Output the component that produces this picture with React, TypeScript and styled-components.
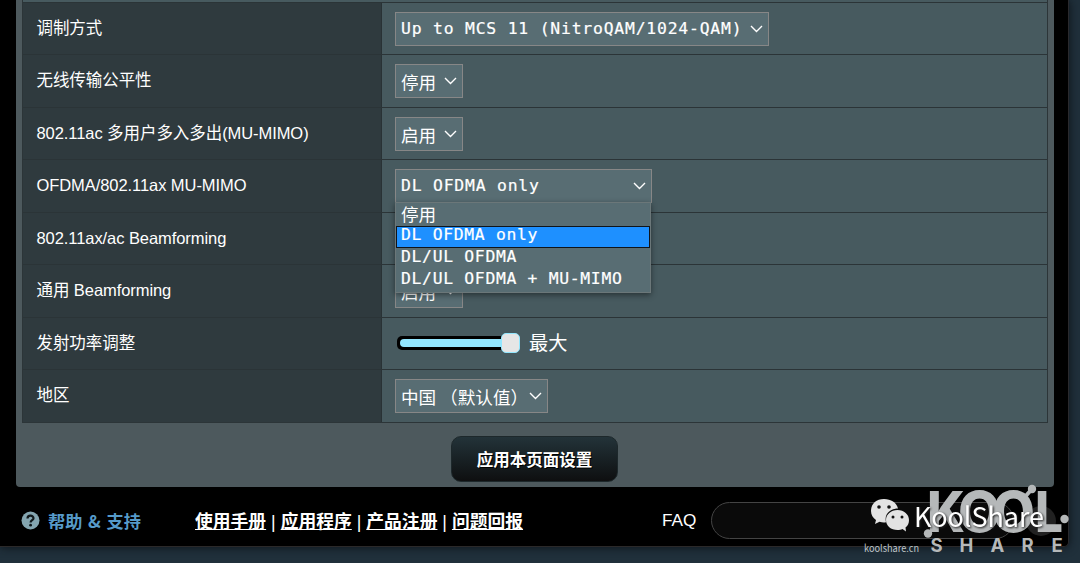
import styled, { createGlobalStyle } from 'styled-components'

const GlobalStyle = createGlobalStyle`
    * {
        box-sizing: border-box;
    }
    body {
        margin: 0;
        overflow: hidden;
        background: #20303b;
        color: #fff;
        font-family: "Liberation Sans", "Noto Sans CJK SC", sans-serif;
    }
`

const Page = styled.div`
    position: relative;
    width: 1080px;
    height: 563px;
    overflow: hidden;
    background: #20303b;
`

const Shell = styled.div`
    width: 1069px;
    height: 547px;
    background: #000;
    border-right: 1px solid #29292d;
    border-bottom: 1px solid #2b2929;
    border-bottom-right-radius: 5px;
    box-shadow: 0 0 10px #0c1116;
`

const Content = styled.div`
    width: 1038px;
    height: 487px;
    margin-left: 16px;
    padding: 0 6px;
    background: #4d595d;
    border-radius: 0 0 4px 4px;
    display: flex;
    flex-direction: column;
    align-items: center;
`

const Table = styled.div`
    width: 1026px;
    height: 423px;
    padding-top: 2px;
    background: #475a5f;
    border: 1px solid #2c3538;
    border-top: none;
    display: grid;
    grid-template-rows: repeat(8, 52.45px);
`

const Row = styled.div`
    display: grid;
    grid-template-columns: 359px 1fr;
    border-top: 1px solid #2b3437;
`

const Label = styled.div`
    padding: 14px 0 0 13.5px;
    background: #2f3a3e;
    border-right: 1px solid #293235;
    font-size: 16.5px;
    line-height: 22px;
    letter-spacing: -0.07px;
    white-space: nowrap;
`

const Value = styled.div`
    position: relative;
    display: flex;
    align-items: center;
    padding-left: 12.6px;
`

const Select = styled.div<{ $width: number }>`
    display: flex;
    align-items: center;
    justify-content: space-between;
    width: ${(p) => p.$width}px;
    height: 34px;
    padding: 0 5px 0 5.4px;
    background: #586d73;
    border: 1px solid #878787;
    font-family: "DejaVu Sans Mono", "Noto Sans CJK SC", monospace;
    font-size: 16.4px;
    letter-spacing: 0.8px;
    line-height: 24px;
    white-space: nowrap;
    -webkit-text-stroke: 0.2px #fff;
`

const Chinese = styled.span`
    position: relative;
    top: 1px;
    font-family: "Noto Sans CJK SC", sans-serif;
    font-size: 17.6px;
    letter-spacing: 0;
    -webkit-text-stroke: 0;
`

const Menu = styled.div`
    position: absolute;
    z-index: 2;
    left: 13px;
    top: 42px;
    width: 256px;
    height: 91px;
    padding: 1px 0;
    background: #586d73;
    border: 1px solid #6b7779;
    box-shadow: 0 2px 6px rgba(0, 0, 0, 0.45);
`

const Option = styled.div<{ $active?: boolean }>`
    height: 22px;
    padding-left: ${(p) => (p.$active ? 4 : 5)}px;
    background: ${(p) => (p.$active ? '#1e90ff' : 'transparent')};
    border: ${(p) => (p.$active ? '1px solid #10151a' : 'none')};
    font-family: "DejaVu Sans Mono", "Noto Sans CJK SC", monospace;
    font-size: 16.4px;
    letter-spacing: 0.68px;
    line-height: ${(p) => (p.$active ? 15 : 18)}px;
    white-space: nowrap;
    -webkit-text-stroke: 0.2px #fff;
`

const Track = styled.div`
    display: flex;
    align-items: center;
    width: 122px;
    height: 14px;
    margin: 0 10px 0 2.4px;
    padding: 0 3px;
    background: #000;
    border-radius: 5px;
`

const Fill = styled.div`
    flex: none;
    width: 101px;
    height: 8px;
    background: #93e7ff;
    border-radius: 4px 0 0 4px;
`

const Thumb = styled.div`
    flex: none;
    width: 19px;
    height: 20px;
    background: #e6e6e6;
    border: 1px solid #93e7ff;
    border-radius: 5px;
`

const Power = styled.span`
    padding-top: 2px;
    font-size: 19.2px;
    line-height: 24px;
`

const ApplyButton = styled.button`
    width: 167px;
    height: 46px;
    margin: 13px 1px 0 0;
    padding: 0;
    border: 1px solid #1d282b;
    border-radius: 10px;
    background: linear-gradient(#233339, #0e0f10);
    color: #fff;
    font: bold 16.5px "Liberation Sans", "Noto Sans CJK SC", sans-serif;
    text-shadow: 1px 1px 0 #000;
`

const Footer = styled.div`
    display: flex;
    align-items: center;
    height: 58px;
    padding: 9px 0 0 21px;
`

const Help = styled.div`
    display: flex;
    align-items: center;
    gap: 8px;
    width: 174px;
    color: #569ac9;
    font: bold 17.2px/24px "Noto Sans CJK SC", sans-serif;
    word-spacing: 1.8px;
`

const Links = styled.div`
    width: 467px;
    padding-top: 2px;
    font-size: 17.8px;
    line-height: 24px;
    white-space: nowrap;

    a {
        color: #fff;
        font-weight: bold;
        text-decoration: underline;
    }
`

const Faq = styled.span`
    width: 49px;
    font-size: 17.2px;
    line-height: 24px;
    position: relative;
    top: -1px;
`

const Search = styled.div`
    width: 303px;
    height: 37px;
    background: #0a0a0a;
    border: 1px solid #444;
    border-radius: 19px;
`

const Watermark = styled.svg`
    position: absolute;
    left: 860px;
    top: 480px;
`

const Chevron = () => (
    <svg width="13" height="8" viewBox="0 0 13 8" fill="none" stroke="#fff" strokeWidth="1.4">
        <path d="M1 1 L6.5 6.5 L12 1" />
    </svg>
)

const selects: Record<string, [string, string, number]> = {
    qam: ['调制方式', 'Up to MCS 11 (NitroQAM/1024-QAM)', 374],
    fairness: ['无线传输公平性', '停用', 68],
    mimo: ['802.11ac 多用户多入多出(MU-MIMO)', '启用', 68],
    ofdma: ['OFDMA/802.11ax MU-MIMO', 'DL OFDMA only', 257],
    beam: ['802.11ax/ac Beamforming', '启用', 68],
    general: ['通用 Beamforming', '启用', 68],
    region: ['地区', '中国 （默认值）', 153],
}

const options = ['停用', 'DL OFDMA only', 'DL/UL OFDMA', 'DL/UL OFDMA + MU-MIMO']
const links = ['使用手册', '应用程序', '产品注册', '问题回报']

function SelectRow({ name }: { name: string }) {
    const [label, value, width] = selects[name]
    const latin = /^[A-Z]/.test(value)
    return (
        <Row>
            <Label>{label}</Label>
            <Value>
                <Select $width={width}>
                    {latin ? value : <Chinese>{value}</Chinese>}
                    <Chevron />
                </Select>
                {name === 'ofdma' && (
                    <Menu>
                        {options.map((o, i) => (
                            <Option key={o} $active={i === 1}>
                                {i === 0 ? <Chinese>{o}</Chinese> : o}
                            </Option>
                        ))}
                    </Menu>
                )}
            </Value>
        </Row>
    )
}

function App() {
    return (
        <>
            <GlobalStyle />
            <Page>
                <Shell>
                    <Content>
                        <Table>
                            {['qam', 'fairness', 'mimo', 'ofdma', 'beam', 'general'].map((n) => (
                                <SelectRow key={n} name={n} />
                            ))}
                            <Row>
                                <Label>发射功率调整</Label>
                                <Value>
                                    <Track>
                                        <Fill />
                                        <Thumb />
                                    </Track>
                                    <Power>最大</Power>
                                </Value>
                            </Row>
                            <SelectRow name="region" />
                        </Table>
                        <ApplyButton>应用本页面设置</ApplyButton>
                    </Content>
                    <Footer>
                        <Help>
                            <svg width="19" height="19" viewBox="0 0 19 19">
                                <circle cx="9.5" cy="9.5" r="9" fill="#84a5b0" />
                                <path d="M6.5 7.5 C6.5 3.8 12.5 3.8 12.5 7.2 C12.5 9.2 9.6 9.2 9.6 11.6" fill="none" stroke="#10181b" strokeWidth="2.2" />
                                <circle cx="9.6" cy="14.2" r="1.4" fill="#10181b" />
                            </svg>
                            帮助 & 支持
                        </Help>
                        <Links>
                            {links.map((l, i) => (
                                <span key={l}>
                                    {i > 0 && ' | '}
                                    <a>{l}</a>
                                </span>
                            ))}
                        </Links>
                        <Faq>FAQ</Faq>
                        <Search />
                    </Footer>
                </Shell>
                <Watermark width="220" height="83" viewBox="860 480 220 83">
                    <circle cx="1041" cy="521" r="15" fill="#fff" opacity="0.13" />
                    <g fill="#b5b8b9">
                        <g fontFamily="Inter" fontWeight="800" fontSize="56">
                            <text x="927" y="532" textLength="38" lengthAdjust="spacingAndGlyphs">K</text>
                            <text x="958" y="532" textLength="43" lengthAdjust="spacingAndGlyphs">O</text>
                            <text x="992" y="532" textLength="43" lengthAdjust="spacingAndGlyphs">O</text>
                            <text x="1035" y="532" textLength="28" lengthAdjust="spacingAndGlyphs">L</text>
                        </g>
                        <path d="M1023 499 L1032 489" stroke="#b5b8b9" strokeWidth="4" />
                        <circle cx="1032" cy="489" r="4.2" />
                        <circle cx="1064.5" cy="519" r="4.2" />
                        <circle cx="928" cy="533.5" r="4.2" />
                        <text x="930.5 959.5 990.5 1021.5 1051.5" y="552" fontFamily="Inter" fontWeight="700" fontSize="18.5">SHARE</text>
                    </g>
                    <text x="864" y="552" fill="#bfc4c7" fontFamily="Noto Sans CJK SC" fontSize="10" textLength="55" lengthAdjust="spacingAndGlyphs">koolshare.cn</text>
                    <g fill="#e3e3e3">
                        <path d="M884 499 C876 499 871 504 871 511 C871 515 873 518 876 520 L875 524 L879.5 521.7 C882 522.5 884 522.5 886 522.2 C884 514 890 508.5 898 508.5 C896.5 502.5 891 499 884 499Z" />
                        <path d="M897.5 510 C891 510 886 514.5 886 520 C886 526 891 530 897.5 530 C899.5 530 901 529.7 902.5 529 L906 531.5 L905.5 527.5 C908 525.5 909 523 909 520 C909 514.5 904 510 897.5 510Z" />
                    </g>
                    <g fill="#111">
                        <circle cx="879" cy="507" r="1.8" />
                        <circle cx="889" cy="507" r="1.8" />
                        <circle cx="893" cy="517" r="1.5" />
                        <circle cx="902" cy="517" r="1.5" />
                    </g>
                    <text x="914" y="527" fill="#fff" fontFamily="Noto Sans CJK SC" fontSize="27" textLength="130" style={{ filter: 'drop-shadow(1px 1px 1px #222)' }}>KoolShare</text>
                </Watermark>
            </Page>
        </>
    )
}

export default App
